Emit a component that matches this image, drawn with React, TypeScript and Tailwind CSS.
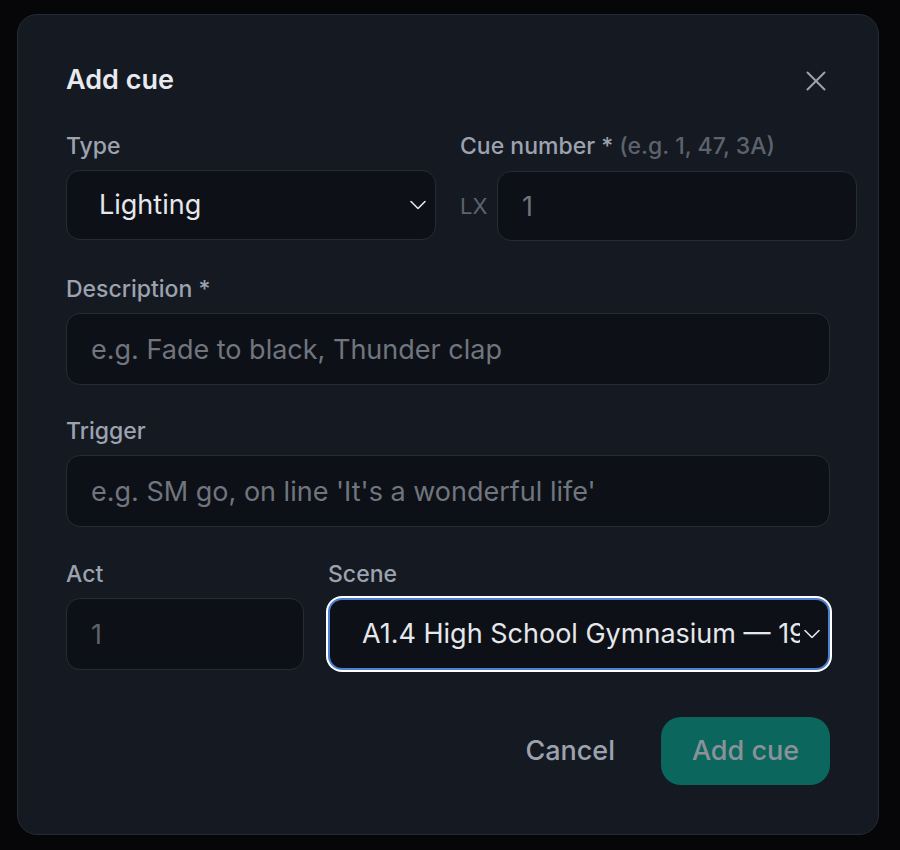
import { useState } from 'react'

function Chevron() {
  return (
    <svg width="16" height="9" viewBox="0 0 16 9" fill="none" className="pointer-events-none absolute right-[10px] top-1/2 -translate-y-1/2">
      <polyline points="1,1 8,8 15,1" stroke="#e5e7eb" strokeWidth="1.6" strokeLinecap="round" strokeLinejoin="round" />
    </svg>
  )
}

function Label({ children }: { children: React.ReactNode }) {
  return <label className="block h-[28px] text-[23px] leading-[27px] font-medium text-[#9ca3af]">{children}</label>
}

export default function App() {
  const [type, setType] = useState('Lighting')
  const [scene, setScene] = useState('a14')

  return (
    <div className="min-h-[850px] bg-[#060609] pt-[14px] pl-[17px]" style={{ fontFamily: 'Inter, "Noto Sans", sans-serif' }}>
      <div className="w-[862px] rounded-[20px] border border-[#232b34] bg-[#151922] px-[48px] pt-[48px] pb-[49px]">
        {/* Header */}
        <div className="flex h-[34px] items-center justify-between">
          <h2 className="text-[27px] font-semibold leading-[34px] text-[#e8eaee]">Add cue</h2>
          <button type="button" className="mr-[2px] mt-[2px] flex h-[24px] w-[24px] items-center justify-center">
            <svg width="20" height="20" viewBox="0 0 20 20" fill="none">
              <path d="M1.5 1.5 18.5 18.5M18.5 1.5 1.5 18.5" stroke="#9ca3af" strokeWidth="2" strokeLinecap="round" />
            </svg>
          </button>
        </div>

        {/* Type + cue number */}
        <div className="mt-[36px] grid grid-cols-2 gap-[24px]">
          <div>
            <Label>Type</Label>
            <div className="relative mt-[9px]">
              <select
                value={type}
                onChange={(e) => setType(e.target.value)}
                className="h-[70px] w-full appearance-none rounded-[14px] border border-[#262c36] bg-[#0d1017] pl-[32px] pr-[32px] text-[27px] text-[#e5e7eb] outline-none"
              >
                <option>Lighting</option>
                <option>Sound</option>
                <option>Video</option>
              </select>
              <Chevron />
            </div>
          </div>
          <div>
            <Label>
              Cue number * <span className="text-[#5c636d]">(e.g. 1, 47, 3A)</span>
            </Label>
            <div className="mt-[10px] flex items-center gap-[10px]">
              <span className="w-[27px] text-[22px] text-[#5c636d]">LX</span>
              <input
                placeholder="1"
                className="h-[70px] w-[360px] shrink-0 rounded-[14px] border border-[#262c36] bg-[#0d1017] px-[24px] text-[27px] text-[#e5e7eb] placeholder:text-[#6f747c] outline-none"
              />
            </div>
          </div>
        </div>

        {/* Description */}
        <div className="mt-[35px]">
          <Label>Description *</Label>
          <input
            placeholder="e.g. Fade to black, Thunder clap"
            className="mt-[9px] h-[72px] w-full rounded-[14px] border border-[#262c36] bg-[#0d1017] px-[24px] text-[27px] text-[#e5e7eb] placeholder:text-[#70757e] outline-none"
          />
        </div>

        {/* Trigger */}
        <div className="mt-[33px]">
          <Label>Trigger</Label>
          <input
            placeholder="e.g. SM go, on line 'It's a wonderful life'"
            className="mt-[9px] h-[72px] w-full rounded-[14px] border border-[#262c36] bg-[#0d1017] px-[24px] text-[27px] text-[#e5e7eb] placeholder:text-[#70757e] outline-none"
          />
        </div>

        {/* Act + scene */}
        <div className="mt-[34px] flex gap-[24px]">
          <div className="w-[238px]">
            <Label>Act</Label>
            <input
              placeholder="1"
              className="mt-[9px] h-[72px] w-full rounded-[14px] border border-[#262c36] bg-[#0d1017] px-[24px] text-[27px] text-[#e5e7eb] placeholder:text-[#5e636b] outline-none"
            />
          </div>
          <div className="flex-1">
            <Label>Scene</Label>
            <div className="relative mt-[9px]">
              <select
                value={scene}
                onChange={(e) => setScene(e.target.value)}
                className="h-[72px] w-full appearance-none rounded-[14px] border-2 border-[#4d7fd3] bg-[#0d1017] pl-[32px] pr-[28px] text-[27px] text-[#e5e7eb] shadow-[0_0_0_2px_#ffffff] outline-none"
              >
                <option value="a14">A1.4 High School Gymnasium — 1958</option>
                <option value="a15">A1.5 Bailey Home</option>
              </select>
              <Chevron />
            </div>
          </div>
        </div>

        {/* Footer */}
        <div className="mt-[47px] flex items-center justify-end gap-[22px]">
          <button type="button" className="h-[68px] px-[24px] text-[27px] font-medium text-[#9ca3af]">
            Cancel
          </button>
          <button type="button" disabled className="h-[68px] w-[169px] rounded-[20px] bg-[#0b665e] text-[27px] font-medium text-[#8b9297]">
            Add cue
          </button>
        </div>
      </div>
    </div>
  )
}
